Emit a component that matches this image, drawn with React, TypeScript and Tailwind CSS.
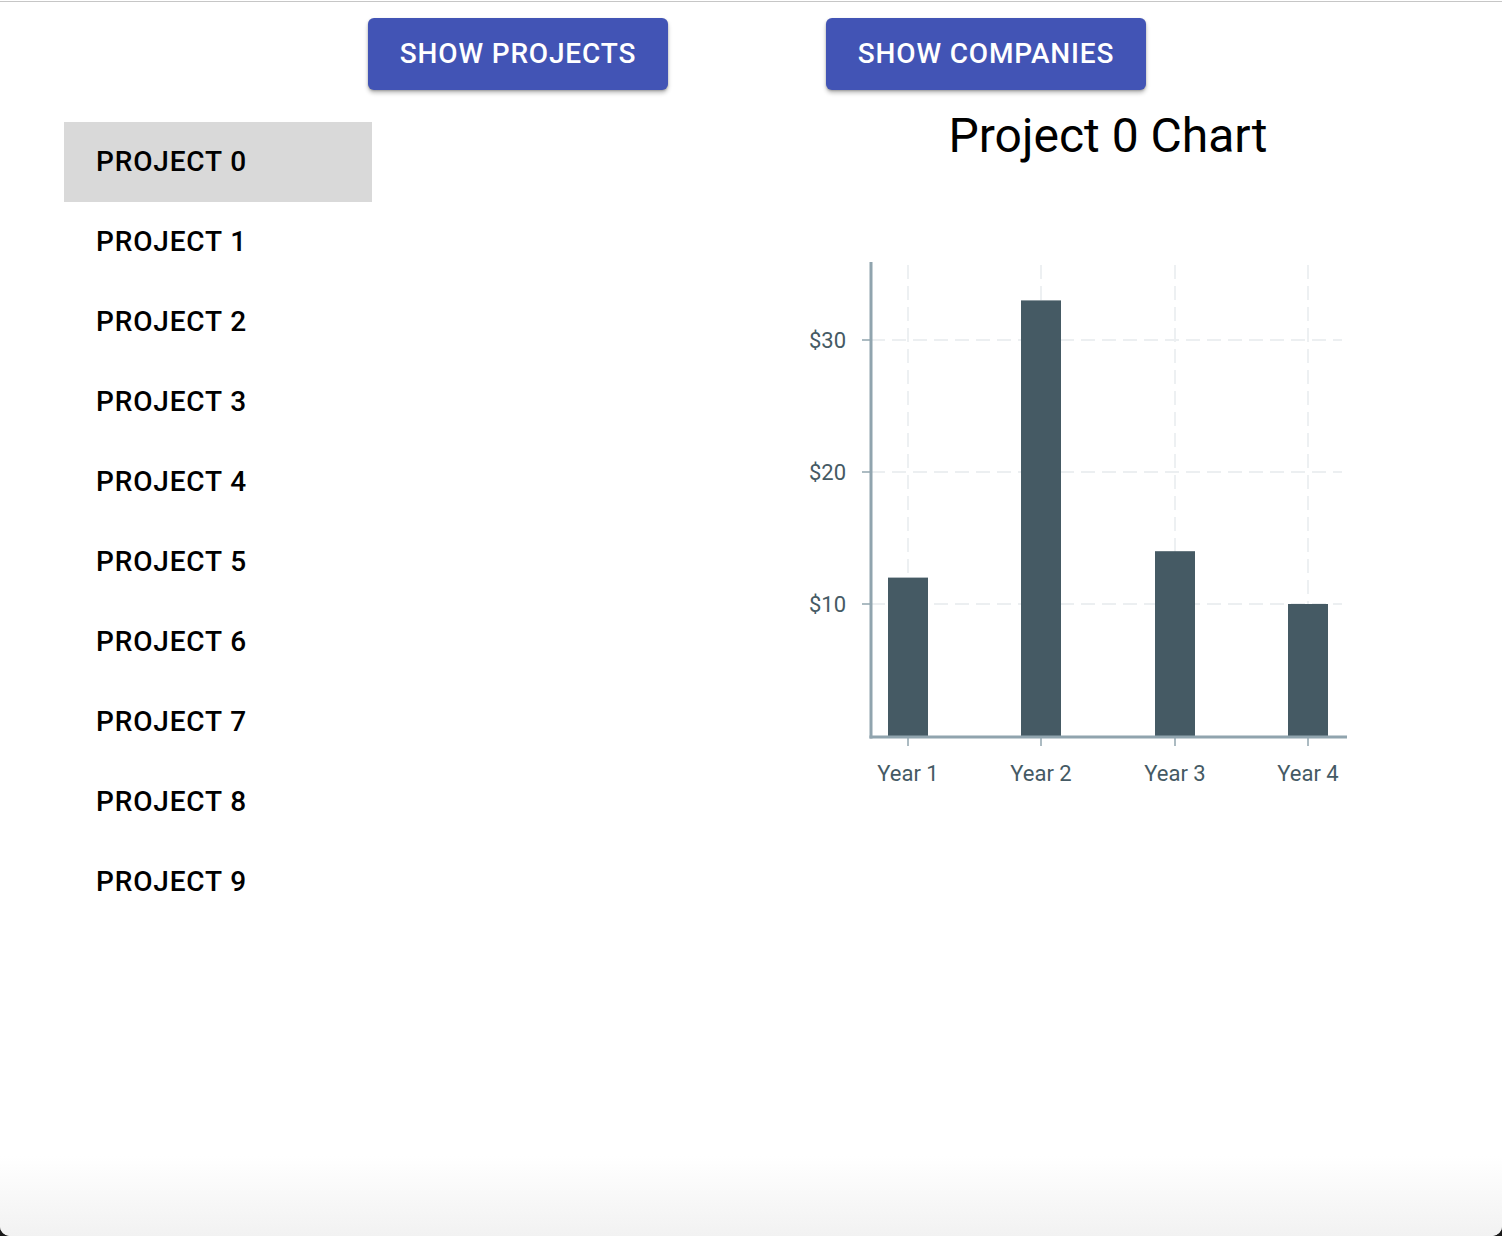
import React from "react";

const projects = Array.from({ length: 10 }, (_, i) => `Project ${i}`);

const bars = [
  { label: "Year 1", x: 908, v: 12 },
  { label: "Year 2", x: 1041, v: 33 },
  { label: "Year 3", x: 1175, v: 14 },
  { label: "Year 4", x: 1308, v: 10 },
];

const yBase = 736;
const perUnit = 13.2;

function Chart() {
  return (
    <svg
      width={696}
      height={640}
      viewBox="760 164 696 640"
      className="block"
      style={{ fontFamily: "Roboto, 'Liberation Sans', sans-serif" }}
    >
      {[340, 472, 604].map((y) => (
        <line key={y} x1={871} x2={1342} y1={y} y2={y} stroke="#ECEFF1" strokeWidth={1.8} strokeDasharray="14 7" />
      ))}
      {bars.map((b) => (
        <line key={b.x} x1={b.x} x2={b.x} y1={265} y2={737} stroke="#ECEFF1" strokeWidth={1.8} strokeDasharray="14 7" />
      ))}
      {bars.map((b) => (
        <rect key={b.label} x={b.x - 20} y={yBase - b.v * perUnit} width={40} height={b.v * perUnit} fill="#455A64" />
      ))}
      <line x1={871} x2={871} y1={262} y2={738.5} stroke="#90A4AE" strokeWidth={3} />
      {[340, 472, 604].map((y) => (
        <line key={y} x1={862} x2={871} y1={y} y2={y} stroke="#90A4AE" strokeWidth={1.5} />
      ))}
      <line x1={869.5} x2={1347} y1={737} y2={737} stroke="#90A4AE" strokeWidth={3} />
      {bars.map((b) => (
        <line key={b.x} x1={b.x} x2={b.x} y1={737} y2={746} stroke="#90A4AE" strokeWidth={1.5} />
      ))}
      {[
        { y: 340, t: "$30" },
        { y: 472, t: "$20" },
        { y: 604, t: "$10" },
      ].map((l) => (
        <text key={l.t} x={846} y={l.y + 8} textAnchor="end" fontSize={22} fill="#455A64">
          {l.t}
        </text>
      ))}
      {bars.map((b) => (
        <text key={b.label} x={b.x} y={781} textAnchor="middle" fontSize={22} fill="#455A64">
          {b.label}
        </text>
      ))}
    </svg>
  );
}

export default function App() {
  return (
    <div className="w-full h-[1236px] bg-[#1a1a1a]" style={{ fontFamily: "Roboto, 'Liberation Sans', sans-serif" }}>
      <div className="h-full bg-white rounded-b-[10px] flex flex-col overflow-hidden">
        <div className="mt-px border-t border-[#c6c6c6]" />
        <div className="flex flex-1 flex-col">
          <div className="flex pt-[16px] pl-[368px] gap-[158px]">
            <button className="w-[300px] h-[72px] rounded-md bg-[#4254b5] text-white text-[28px] font-medium uppercase tracking-[0.03em] shadow-[0_3px_4px_rgba(0,0,0,0.25),0_1px_2px_rgba(0,0,0,0.2)]">
              Show Projects
            </button>
            <button className="w-[320px] h-[72px] rounded-md bg-[#4254b5] text-white text-[28px] font-medium uppercase tracking-[0.03em] shadow-[0_3px_4px_rgba(0,0,0,0.25),0_1px_2px_rgba(0,0,0,0.2)]">
              Show Companies
            </button>
          </div>
          <div className="flex items-start">
            <div className="ml-[64px] mt-[32px] w-[308px] flex flex-col">
              {projects.map((p, i) => (
                <div
                  key={p}
                  className={`h-[80px] flex items-center pl-[32px] text-[28px] font-medium uppercase tracking-[0.03em] text-black ${
                    i === 0 ? "bg-[#d9d9d9]" : ""
                  }`}
                >
                  {p}
                </div>
              ))}
            </div>
            <div className="ml-[388px] mt-[18px] w-[696px] flex flex-col">
              <h1 className="text-center text-[48px] leading-[56px] font-normal text-black">Project 0 Chart</h1>
              <Chart />
            </div>
          </div>
        </div>
        <div className="h-[80px] bg-gradient-to-b from-white to-[#f2f2f2]" />
      </div>
    </div>
  );
}
